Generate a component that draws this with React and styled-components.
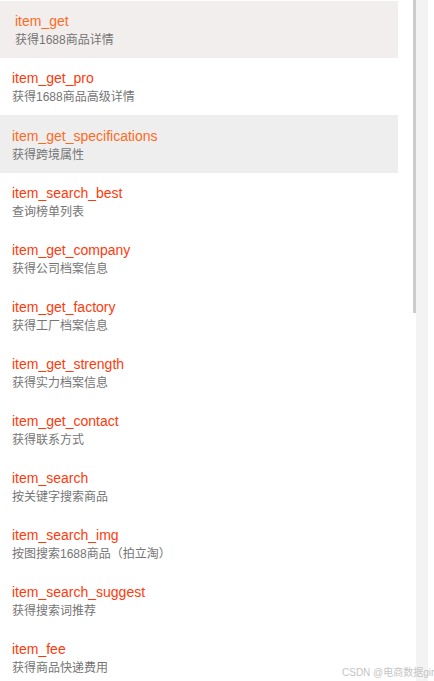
import styled, { createGlobalStyle } from 'styled-components';

const GlobalStyle = createGlobalStyle`
	html, body {
		margin: 0;
		padding: 0;
		background: #fff;
	}
	body {
		font-family: "Liberation Sans", Arial, "Noto Sans CJK SC", sans-serif;
	}
`;

const Page = styled.div`
	position: relative;
	display: flex;
	width: 434px;
	height: 681px;
	overflow: hidden;
	background: #fff;
`;
const List = styled.ul`
	list-style: none;
	margin: 1px 0 0;
	padding: 0;
	width: 398px;
	flex: none;
`;
const Row = styled.li`
	height: ${props => props.hover ? 58 : 57}px;
	display: flex;
	flex-direction: column;
	justify-content: center;
	gap: 2px;
	padding-left: ${props => props.active ? 15 : 12}px;
	padding-top: ${props => props.active ? 0 : 1}px;
	box-sizing: border-box;
	background: ${props => props.active ? '#f2eeed' : props.hover ? '#eeeeee' : '#fff'};
`;
const Title = styled.div`
	font-size: 14px;
	line-height: 18px;
	color: ${props => props.light ? '#ff6a1f' : '#ff3a0a'};
`;
const Desc = styled.div`
	font-size: 12px;
	line-height: 16px;
	color: #757575;
	font-family: "Liberation Sans", "Noto Sans CJK SC", sans-serif;
`;
const Rail = styled.div`
	margin-left: 15px;
	width: 15px;
	height: 100%;
	flex: none;
	background: linear-gradient(to right, transparent 3px, #f3f3f3 3px);
`;
const Thumb = styled.div`
	width: 3px;
	height: 313px;
	background: #cccccc;
`;
const Watermark = styled.div`
	position: absolute;
	left: 342px;
	top: 664px;
	font-size: 10px;
	color: #c4c4c4;
	white-space: nowrap;
	font-family: "Liberation Sans", "Noto Sans CJK SC", sans-serif;
`;

const apis = [
	['item_get', '获得1688商品详情'],
	['item_get_pro', '获得1688商品高级详情'],
	['item_get_specifications', '获得跨境属性'],
	['item_search_best', '查询榜单列表'],
	['item_get_company', '获得公司档案信息'],
	['item_get_factory', '获得工厂档案信息'],
	['item_get_strength', '获得实力档案信息'],
	['item_get_contact', '获得联系方式'],
	['item_search', '按关键字搜索商品'],
	['item_search_img', '按图搜索1688商品（拍立淘）'],
	['item_search_suggest', '获得搜索词推荐'],
	['item_fee', '获得商品快递费用'],
];

const App = () => {
	return (
		<>
			<GlobalStyle />
			<Page>
				<List>
					{apis.map(([name, desc], index) => (
						<Row key={name} active={index === 0} hover={index === 2}>
							<Title light={index === 0 || index === 2}>{name}</Title>
							<Desc>{desc}</Desc>
						</Row>
					))}
				</List>
				<Rail>
					<Thumb />
				</Rail>
				<Watermark>CSDN @电商数据girl</Watermark>
			</Page>
		</>
	);
};

export default App;
